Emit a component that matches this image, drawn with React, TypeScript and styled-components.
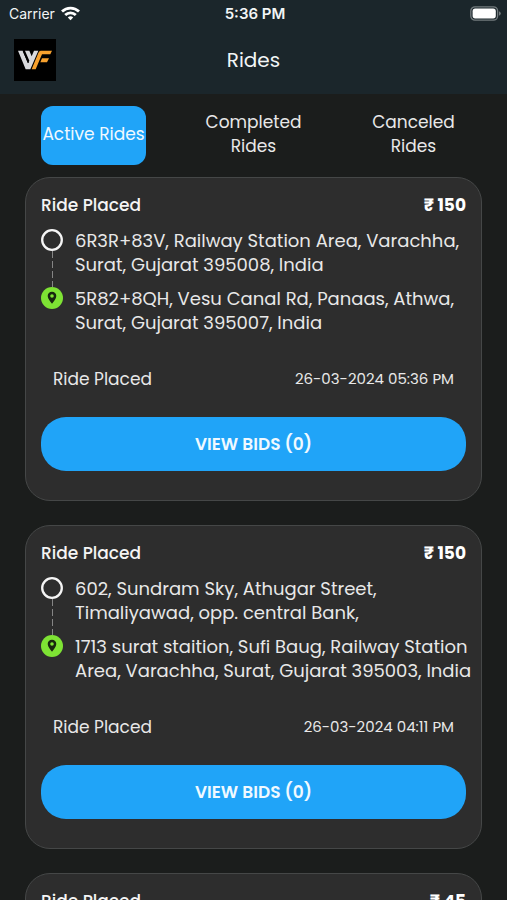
import React from "react";
import styled, { createGlobalStyle } from "styled-components";

const GlobalStyle = createGlobalStyle`
  *, *::before, *::after { box-sizing: border-box; }
  body { margin: 0; background: #1b1d1c; }
  button { font: inherit; color: inherit; border: 0; padding: 0; cursor: pointer; }
  h1, h2, p, ol { margin: 0; padding: 0; }
`;

const Screen = styled.div`
  display: flex;
  flex-direction: column;
  height: 100vh;
  background: #1b1d1c;
  color: #e8e8e8;
  font-family: Poppins, Inter, "Liberation Sans", sans-serif;
  font-size: 17px;
  line-height: 24px;
`;

const TopArea = styled.header`
  flex: none;
  background: #1b262b;
`;

const StatusBar = styled.div`
  display: grid;
  grid-template-columns: 1fr auto 1fr;
  align-items: center;
  height: 27px;
  padding: 0 6px 0 9px;
  font-family: Inter, sans-serif;
  font-size: 14px;
  color: #f2f5f6;
`;

const Carrier = styled.span`
  display: flex;
  align-items: center;
  gap: 6px;
`;

const Clock = styled.time`
  font-size: 15px;
  font-weight: 600;
`;

const BatterySlot = styled.span`
  display: flex;
  justify-content: flex-end;
`;

const TitleBar = styled.div`
  display: grid;
  grid-template-columns: 1fr auto 1fr;
  align-items: center;
  height: 67px;
  padding: 0 14px 2px;
`;

const Title = styled.h1`
  font-size: 20px;
  font-weight: 400;
  color: #f2f5f6;
`;

const Tabs = styled.nav`
  flex: none;
  display: flex;
  justify-content: space-between;
  padding: 12px 41px;
`;

const Tab = styled.button<{ $active?: boolean }>`
  width: 105px;
  height: 59px;
  && { padding-bottom: 3px; }
  border-radius: 12px;
  text-align: center;
  white-space: normal;
  background: ${(p) => (p.$active ? "#20a4f8" : "transparent")};
  && { color: ${(p) => (p.$active ? "#f0f9ff" : "#e8e8e8")}; }
`;

const List = styled.main`
  flex: 1;
  min-height: 0;
  overflow-y: auto;
  scrollbar-width: none;
  display: flex;
  flex-direction: column;
  gap: 24px;
  padding: 0 25px 25px;
`;

const Card = styled.article`
  flex: none;
  padding: 15px 15px 29px;
  border: 1px solid #454747;
  border-radius: 25px;
  background: #2d2d2d;
`;

const Row = styled.div`
  display: flex;
  justify-content: space-between;
  align-items: center;
`;

const Status = styled.h2`
  font-size: 17px;
  font-weight: 500;
  color: #f4f4f4;
`;

const Price = styled.span`
  font-weight: 700;
  color: #ffffff;
`;

const Route = styled.ol`
  list-style: none;
  margin: 12px -8px 0 0;
`;

const Stop = styled.li`
  display: flex;
  gap: 12px;
`;

const Marker = styled.span`
  flex: none;
  display: flex;
  flex-direction: column;
  align-items: center;
  width: 22px;
`;

const Connector = styled.span`
  flex: 1;
  width: 1px;
  background: repeating-linear-gradient(#858585 0 7px, transparent 7px 10px);
`;

const Address = styled.p<{ $last?: boolean }>`
  padding-bottom: ${(p) => (p.$last ? "0" : "10px")};
  font-size: 18px;
  white-space: pre-line;
`;

const Details = styled(Row)`
  padding: 0 12px;
  margin: 32px 0 26px;
`;

const Stamp = styled.time`
  font-size: 15px;
`;

const BidsButton = styled.button`
  display: block;
  width: 100%;
  height: 54px;
  border-radius: 25px;
  background: #20a4f8;
  && { color: #f0f9ff; font-weight: 600; }
`;

function Wifi() {
  return (
    <svg width="19" height="15" viewBox="0 0 19 15" fill="none" stroke="#fff" strokeWidth="2.8" aria-hidden="true">
      <path d="M1 5.6C5.8.9 13.2.9 18 5.6" />
      <path d="M4.2 9C7.2 6.1 11.8 6.1 14.8 9" />
      <path d="M6.8 11.4C8.4 9.8 10.6 9.8 12.2 11.4L9.5 14.3Z" fill="#fff" stroke="none" />
    </svg>
  );
}

function Battery() {
  return (
    <svg width="31" height="15" viewBox="0 0 31 15" aria-hidden="true">
      <rect x=".8" y=".8" width="26.8" height="13.4" rx="4.2" fill="none" stroke="#737b7e" strokeWidth="1.3" />
      <rect x="2.6" y="2.6" width="23.2" height="9.8" rx="2.6" fill="#fff" />
      <path d="M29 5.2Q30.8 6 30.8 7.5T29 9.8Z" fill="#737b7e" />
    </svg>
  );
}

function Logo() {
  return (
    <svg width="42" height="42" viewBox="0 0 126 126" role="img" aria-label="WF">
      <rect width="126" height="126" fill="#000" />
      <g fill="#d9dadd">
        <path d="M12 35H26L42 73L46 65L33 35H46L53 52L60 35H73L49 91H35Z" />
      </g>
      <g fill="#f7a12e">
        <path d="M80 35H114L109 46H84L65 91H53L73 42Q76 35 80 35Z" />
        <path d="M84 58H105L99 70H79Z" />
      </g>
      <path d="M28 37L43 72" stroke="#000" strokeWidth="3" />
    </svg>
  );
}

function OriginIcon() {
  return (
    <svg width="22" height="22" viewBox="0 0 22 22" aria-hidden="true">
      <circle cx="11" cy="11" r="9.8" fill="none" stroke="#f5f5f5" strokeWidth="2.3" />
    </svg>
  );
}

function DestinationIcon() {
  return (
    <svg width="22" height="22" viewBox="0 0 22 22" aria-hidden="true">
      <circle cx="11" cy="11" r="11" fill="#7ee334" />
      <path
        fillRule="evenodd"
        d="M11 4.8C8.5 4.8 6.7 6.6 6.7 9C6.7 11.8 9.3 14.6 11 16.8C12.7 14.6 15.3 11.8 15.3 9C15.3 6.6 13.5 4.8 11 4.8ZM11 7.2A1.8 1.8 0 1 1 11 10.8A1.8 1.8 0 1 1 11 7.2Z"
        fill="#18260f"
      />
    </svg>
  );
}

interface Ride {
  id: number;
  price: string;
  from: string;
  to: string;
  placedAt: string;
}

const rides: Ride[] = [
  {
    id: 1,
    price: "₹ 150",
    from: "6R3R+83V, Railway Station Area, Varachha,\nSurat, Gujarat 395008, India",
    to: "5R82+8QH, Vesu Canal Rd, Panaas, Athwa,\nSurat, Gujarat 395007, India",
    placedAt: "26-03-2024 05:36 PM",
  },
  {
    id: 2,
    price: "₹ 150",
    from: "602, Sundram Sky, Athugar Street,\nTimaliyawad, opp. central Bank,",
    to: "1713 surat staition, Sufi Baug, Railway Station\nArea, Varachha, Surat, Gujarat 395003, India",
    placedAt: "26-03-2024 04:11 PM",
  },
];

function RideHeading({ price }: { price: string }) {
  return (
    <Row>
      <Status>Ride Placed</Status>
      <Price>{price}</Price>
    </Row>
  );
}

function RideCard({ ride }: { ride: Ride }) {
  return (
    <Card>
      <RideHeading price={ride.price} />
      <Route>
        <Stop>
          <Marker>
            <OriginIcon />
            <Connector />
          </Marker>
          <Address>{ride.from}</Address>
        </Stop>
        <Stop>
          <Marker>
            <DestinationIcon />
          </Marker>
          <Address $last>{ride.to}</Address>
        </Stop>
      </Route>
      <Details>
        <span>Ride Placed</span>
        <Stamp>{ride.placedAt}</Stamp>
      </Details>
      <BidsButton type="button">VIEW BIDS (0)</BidsButton>
    </Card>
  );
}

export default function App() {
  return (
    <Screen>
      <GlobalStyle />
      <TopArea>
        <StatusBar>
          <Carrier>
            Carrier
            <Wifi />
          </Carrier>
          <Clock>5:36 PM</Clock>
          <BatterySlot>
            <Battery />
          </BatterySlot>
        </StatusBar>
        <TitleBar>
          <Logo />
          <Title>Rides</Title>
        </TitleBar>
      </TopArea>
      <Tabs aria-label="Ride status">
        <Tab type="button" $active aria-current="page">Active Rides</Tab>
        <Tab type="button">Completed Rides</Tab>
        <Tab type="button">Canceled Rides</Tab>
      </Tabs>
      <List>
        {rides.map((ride) => (
          <RideCard key={ride.id} ride={ride} />
        ))}
        <Card>
          <RideHeading price="₹ 45" />
        </Card>
      </List>
    </Screen>
  );
}
